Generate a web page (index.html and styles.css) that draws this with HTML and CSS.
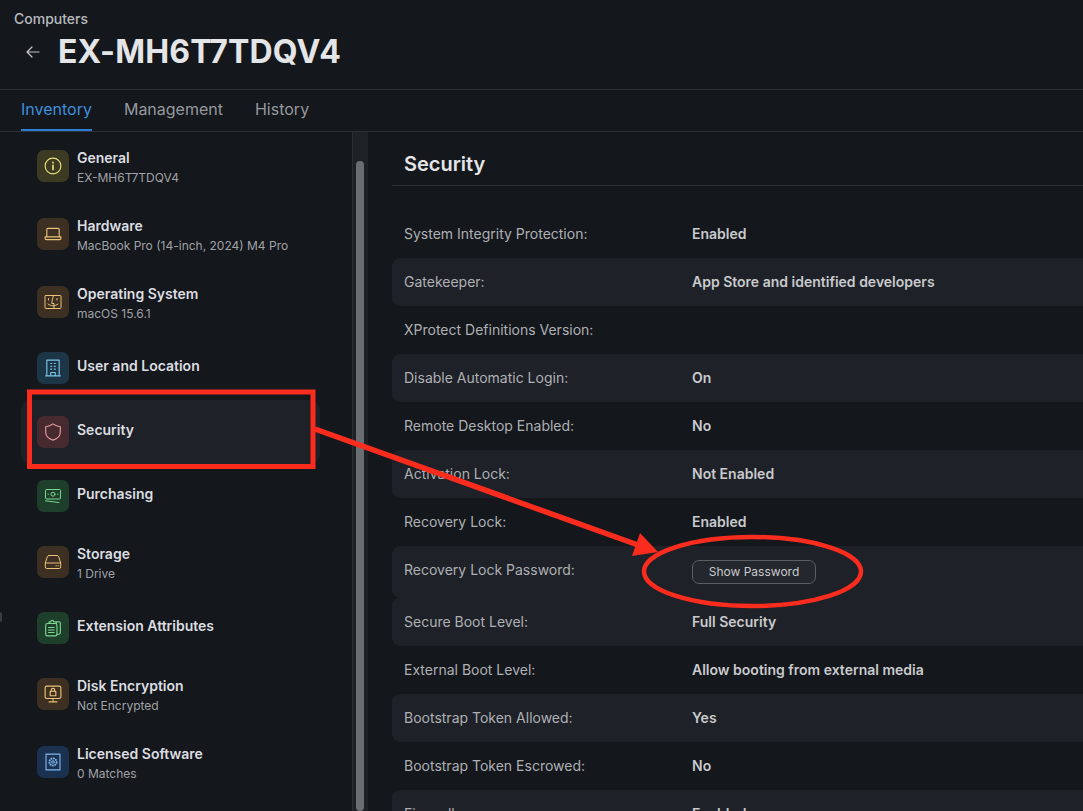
FILE: index.html
```html
<!DOCTYPE html>
<html lang="en">

<head>
    <meta charset="UTF-8">
    <meta name="viewport" content="width=device-width, initial-scale=1.0">
    <title>EX-MH6T7TDQV4</title>
    <link rel="stylesheet" href="styles.css">
</head>

<body>
    <div class="page">
        <header class="page-header">
            <div class="breadcrumb">Computers</div>
            <div class="title-row">
                <svg class="back-icon" viewBox="0 0 16 16" fill="none" stroke="currentColor" stroke-width="1.2" stroke-linecap="round" stroke-linejoin="round">
                    <path d="M14 8H2M7 3L2 8l5 5" />
                </svg>
                <h1>EX-MH6T7TDQV4</h1>
            </div>
        </header>

        <nav class="tabs">
            <a class="tab active">Inventory</a>
            <a class="tab">Management</a>
            <a class="tab">History</a>
        </nav>

        <div class="content">
            <aside class="sidebar">
                <ul class="side-list">
                    <li class="side-item">
                        <span class="side-icon yellow">
                            <svg viewBox="0 0 16 16"><circle cx="8" cy="8" r="7" /><path class="bold" d="M8 7.400v3.600M8 4.800v.4" /></svg>
                        </span>
                        <div class="side-text double"><div class="side-name">General</div><div class="side-sub">EX-MH6T7TDQV4</div></div>
                    </li>
                    <li class="side-item">
                        <span class="side-icon orange">
                            <svg viewBox="0 0 16 16"><path d="M2.500 10.500V4a1 1 0 0 1 1-1h9a1 1 0 0 1 1 1v6.500M1 10.500h14v1.500a1 1 0 0 1-1 1H2a1 1 0 0 1-1-1z" /></svg>
                        </span>
                        <div class="side-text double"><div class="side-name">Hardware</div><div class="side-sub">MacBook Pro (14-inch, 2024) M4 Pro</div></div>
                    </li>
                    <li class="side-item">
                        <span class="side-icon orange">
                            <svg viewBox="0 0 18 16"><rect x="1" y="1.500" width="16" height="13" rx="1" /><path d="M9.500 1.500C8.500 5 8 7 7.800 9.500H10v5M4.500 4.500v1.500M13 4.500v1.500M4 10c3 2.500 7 2.500 10 0" /></svg>
                        </span>
                        <div class="side-text double"><div class="side-name">Operating System</div><div class="side-sub">macOS 15.6.1</div></div>
                    </li>
                    <li class="side-item single">
                        <span class="side-icon blue">
                            <svg viewBox="0 0 16 16"><path d="M2.500 1h11v14h-11zM1.500 15h13M6 15v-3h4v3M6 4h.8M9.200 4h.8M6 6.500h.8M9.200 6.500h.8M6 9h.8M9.200 9h.8" /></svg>
                        </span>
                        <div class="side-text"><div class="side-name">User and Location</div></div>
                    </li>
                    <li class="side-item single selected">
                        <span class="side-icon red">
                            <svg viewBox="0 0 16 16"><path d="M8 .8c2 1.500 4 2.200 6.500 2.500v4.700c0 3.300-2.500 6-6.500 7.200C4 14 1.500 11.300 1.500 8V3.300C4 3 6 2.300 8 .8z" /></svg>
                        </span>
                        <div class="side-text"><div class="side-name">Security</div></div>
                    </li>
                    <li class="side-item single">
                        <span class="side-icon green">
                            <svg viewBox="0 0 18 16"><rect x="1.500" y="1.500" width="15" height="9.500" rx="1" /><circle cx="9" cy="6.200" r="2" /><path d="M4 6.200h.5M13.500 6.200h.5M1.500 12.800l13.500 1.700" /></svg>
                        </span>
                        <div class="side-text"><div class="side-name">Purchasing</div></div>
                    </li>
                    <li class="side-item">
                        <span class="side-icon orange">
                            <svg viewBox="0 0 18 16"><path d="M5 1.500h8c.8 0 1.400.4 1.700 1.200l2 6.300V13a1.500 1.500 0 0 1-1.500 1.500H2.800A1.500 1.500 0 0 1 1.300 13V9l2-6.300C3.600 1.900 4.200 1.500 5 1.500zM1.300 9h15.400M12 11.800h.4M14 11.800h.4" /></svg>
                        </span>
                        <div class="side-text double"><div class="side-name">Storage</div><div class="side-sub">1 Drive</div></div>
                    </li>
                    <li class="side-item single">
                        <span class="side-icon green">
                            <svg viewBox="0 0 16 16"><rect x="1.500" y="4" width="10" height="11" rx="1.500" /><path d="M4.500 4V2.500h1.500a1.200 1.200 0 0 1 2.500 0H11V4M11 2.500h1.500A1.500 1.500 0 0 1 14.500 4v8a1.500 1.500 0 0 1-1.500 1.500h-1.500M4 7.500h5M4 9.800h5M4 12h5" /></svg>
                        </span>
                        <div class="side-text"><div class="side-name">Extension Attributes</div></div>
                    </li>
                    <li class="side-item">
                        <span class="side-icon orange">
                            <svg viewBox="0 0 16 16"><rect x="1" y="1" width="14" height="11" rx="1.500" /><path d="M8 12v3M4.500 15h7" /><rect x="5.500" y="5.500" width="5" height="4" /><path d="M6.500 5.500v-1a1.500 1.500 0 0 1 3 0v1" /></svg>
                        </span>
                        <div class="side-text double"><div class="side-name">Disk Encryption</div><div class="side-sub">Not Encrypted</div></div>
                    </li>
                    <li class="side-item">
                        <span class="side-icon sky">
                            <svg viewBox="0 0 16 16"><rect x="1.800" y="1" width="12.400" height="14" /><circle cx="8" cy="8" r="3.200" stroke-dasharray="1.500 .6" stroke-width="1.600" stroke-linecap="butt" /><circle cx="8" cy="8" r="1.100" /></svg>
                        </span>
                        <div class="side-text double"><div class="side-name">Licensed Software</div><div class="side-sub">0 Matches</div></div>
                    </li>
                </ul>
            </aside>

            <div class="scrollbar"><div class="scroll-thumb"></div></div>

            <main class="detail">
                <h2>Security</h2>
                <div class="rows">
                    <div class="row"><span class="label">System Integrity Protection:</span><span class="value">Enabled</span></div>
                    <div class="row alt"><span class="label">Gatekeeper:</span><span class="value">App Store and identified developers</span></div>
                    <div class="row"><span class="label">XProtect Definitions Version:</span><span class="value"></span></div>
                    <div class="row alt"><span class="label">Disable Automatic Login:</span><span class="value">On</span></div>
                    <div class="row"><span class="label">Remote Desktop Enabled:</span><span class="value">No</span></div>
                    <div class="row alt"><span class="label">Activation Lock:</span><span class="value">Not Enabled</span></div>
                    <div class="row"><span class="label">Recovery Lock:</span><span class="value">Enabled</span></div>
                    <div class="row alt tall"><span class="label">Recovery Lock Password:</span><span class="value"><button class="show-btn">Show Password</button></span></div>
                    <div class="row alt"><span class="label">Secure Boot Level:</span><span class="value">Full Security</span></div>
                    <div class="row"><span class="label">External Boot Level:</span><span class="value">Allow booting from external media</span></div>
                    <div class="row alt"><span class="label">Bootstrap Token Allowed:</span><span class="value">Yes</span></div>
                    <div class="row"><span class="label">Bootstrap Token Escrowed:</span><span class="value">No</span></div>
                    <div class="row alt"><span class="label">Firewall:</span><span class="value">Enabled</span></div>
                </div>
            </main>
        </div>

        <div class="edge-handle"></div>
    </div>

    <!-- red annotation drawn over the screenshot -->
    <svg class="markup" viewBox="0 0 1083 811" fill="none">
        <rect x="29.500" y="392" width="283.500" height="74.500" stroke="#f92c1e" stroke-width="5" />
        <path d="M315 429L638 545" stroke="#f92c1e" stroke-width="5.500" />
        <path d="M658 552L640 533L632 556z" fill="#f92c1e" />
        <ellipse cx="752.500" cy="571.500" rx="108.500" ry="34.500" stroke="#f92c1e" stroke-width="4.500" />
    </svg>
</body>

</html>
```

FILE: styles.css
```css
/* General Styles */
html,
body {
    margin: 0;
    height: 100%;
    overflow: hidden;
}

body {
    font-family: 'Inter', sans-serif;
    background-color: #14171c;
    color: #e6e7e9;
}

.page {
    position: relative;
    height: 811px;
    display: flex;
    flex-direction: column;
    overflow: hidden;
}

/* Header */
.page-header {
    height: 90px;
    box-sizing: border-box;
    padding: 11px 14px 0;
    border-bottom: 1px solid #2c2f34;
    flex-shrink: 0;
}

.breadcrumb {
    font-size: 14px;
    line-height: 16px;
    font-weight: 500;
    color: #b9bbbf;
}

.title-row {
    display: flex;
    align-items: center;
    margin-top: 2px;
    padding-left: 11px;
}

.back-icon {
    width: 16px;
    height: 16px;
    color: #c4c6c9;
    margin-right: 17px;
}

h1 {
    margin: 0;
    font-size: 32px;
    line-height: 46px;
    font-weight: 700;
    letter-spacing: 0.15px;
    color: #e4e5e7;
}

/* Tabs */
.tabs {
    height: 42px;
    box-sizing: border-box;
    display: flex;
    gap: 32px;
    padding-left: 21px;
    border-bottom: 1px solid #2c2f34;
    flex-shrink: 0;
}

.tab {
    font-size: 16px;
    line-height: 38px;
    height: 41px;
    box-sizing: border-box;
    color: #96999e;
}

.tab.active {
    color: #3f8fdc;
    border-bottom: 2px solid #2a7ed3;
}

/* Sidebar */
.content {
    flex: 1;
    display: flex;
    min-height: 0;
}

.sidebar {
    width: 353px;
    box-sizing: border-box;
    border-right: 1px solid #2c2f34;
    flex-shrink: 0;
}

.side-list {
    list-style: none;
    margin: 0;
    padding: 0 32px 0 21px;
}

.side-item {
    height: 68px;
    display: flex;
    align-items: center;
    gap: 8px;
    padding-left: 16px;
    box-sizing: border-box;
    border-radius: 10px;
}

.side-item.single {
    height: 64px;
}

.side-item.selected {
    background-color: #1e2127;
}

.side-icon {
    width: 32px;
    height: 32px;
    border-radius: 7px;
    display: flex;
    align-items: center;
    justify-content: center;
    flex-shrink: 0;
}

.side-icon svg {
    width: 18px;
    height: 18px;
    fill: none;
    stroke: currentColor;
    stroke-width: 1;
    stroke-linecap: round;
    stroke-linejoin: round;
}

.side-icon svg .bold {
    stroke-width: 1.500;
}

.yellow { background: #3c3a22; color: #e9e27a; }
.orange { background: #3d2f22; color: #ecc277; }
.blue { background: #1c3647; color: #7cc7e8; }
.red { background: #472a2f; color: #e79b9b; }
.green { background: #1e3f2b; color: #7bd88f; }
.sky { background: #1a3150; color: #7fb5ec; }

.side-text {
    padding-bottom: 4px;
}

.side-text.double {
    padding-top: 3px;
    padding-bottom: 0;
}

.side-name {
    font-size: 14px;
    line-height: 20px;
    font-weight: 600;
    color: #dcdde0;
}

.side-sub {
    font-size: 12px;
    line-height: 18px;
    margin-top: 1px;
    color: #a0a2a6;
}

/* Scrollbar */
.scrollbar {
    width: 15px;
    background-color: #1e2125;
    flex-shrink: 0;
    padding-top: 29px;
    box-sizing: border-box;
}

.scroll-thumb {
    width: 8px;
    height: 100%;
    margin-left: 3px;
    border-radius: 4px;
    background-color: #6a6d72;
}

/* Detail panel */
.detail {
    flex: 1;
    padding-left: 24px;
    min-width: 0;
}

h2 {
    margin: 0;
    height: 54px;
    box-sizing: border-box;
    padding: 19px 0 0 12px;
    font-size: 20px;
    line-height: 26px;
    font-weight: 600;
    color: #e4e5e7;
    border-bottom: 1px solid #2c2f34;
}

.rows {
    padding-top: 24px;
}

.row {
    height: 48px;
    display: flex;
    align-items: center;
    padding-left: 12px;
    font-size: 14px;
    border-radius: 8px 0 0 8px;
}

.row.alt {
    background-color: #1e2127;
}

.row.tall {
    height: 52px;
}

.label {
    width: 288px;
    flex-shrink: 0;
    padding-bottom: 2px;
    color: #aeb0b4;
}

.row.tall .label {
    padding-bottom: 6px;
}

.value {
    padding-bottom: 2px;
    font-weight: 600;
    color: #c9cacd;
}

.row.tall .value {
    padding-bottom: 0;
}

.show-btn {
    display: block;
    width: 124px;
    height: 24px;
    padding: 0 0 2px;
    font-family: inherit;
    font-size: 12px;
    color: #c9cacd;
    background-color: #24272d;
    border: 1px solid #5b5e64;
    border-radius: 7px;
}

/* Annotation */
.edge-handle {
    position: absolute;
    left: 0;
    top: 612px;
    width: 2px;
    height: 10px;
    border-radius: 0 2px 2px 0;
    background-color: #3b3d41;
}

.markup {
    position: absolute;
    left: 0;
    top: 0;
    width: 1083px;
    height: 811px;
    pointer-events: none;
}
```
